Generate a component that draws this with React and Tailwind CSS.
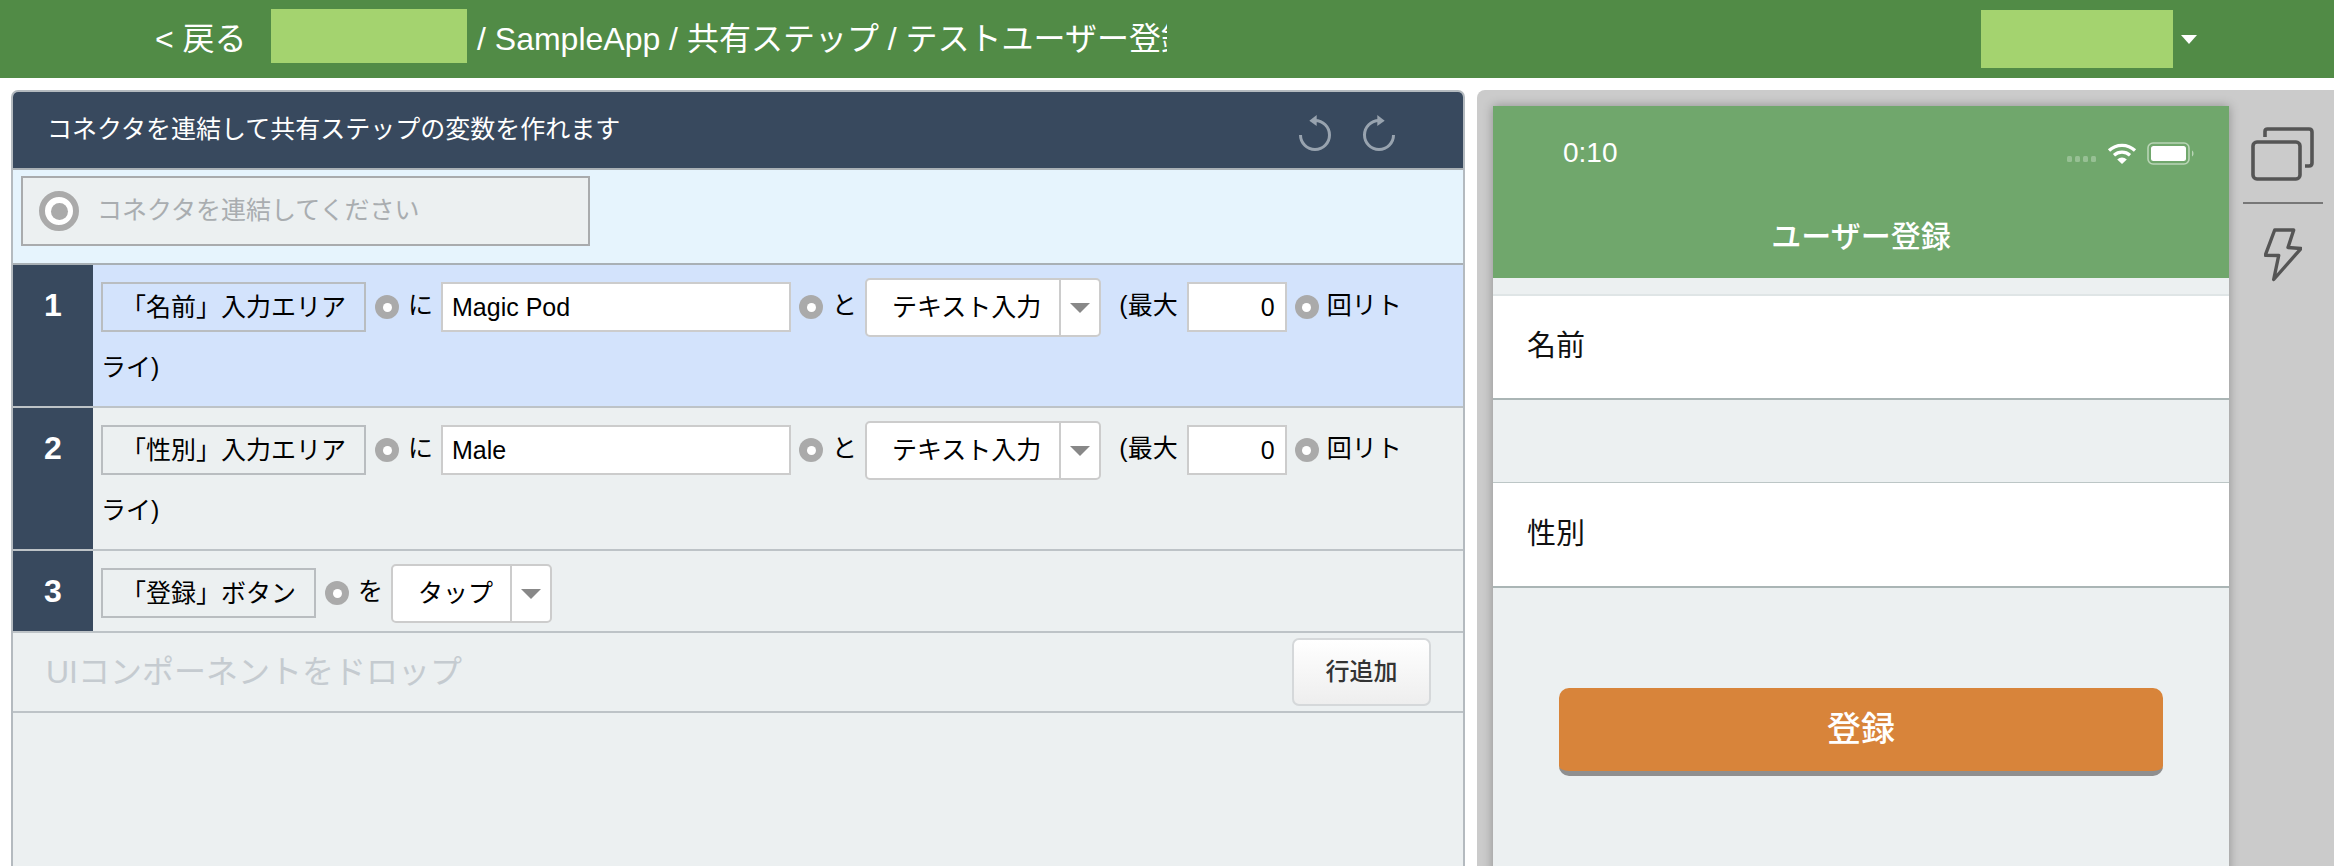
import React from "react";

const Dot = () => (
  <span className="inline-flex align-middle items-center justify-center w-[24px] h-[24px] rounded-full bg-[#aaaaaa]">
    <span className="block w-[9px] h-[9px] rounded-full bg-white" />
  </span>
);

const Caret = () => (
  <span className="block w-0 h-0 border-x-[10px] border-t-[10px] border-x-transparent border-t-[#888888]" />
);

const Selector = ({ children }) => (
  <span className="inline-flex align-middle items-center h-[50px] px-[18px] border-2 border-[#b9bdc0] leading-none">
    {children}
  </span>
);

const Field = ({ width, right, children }) => (
  <span
    className={`inline-flex align-middle items-center h-[50px] border-2 border-[#cccccc] bg-white leading-none ${width} ${
      right ? "justify-end pr-[10px]" : "pl-[9px]"
    }`}
  >
    {children}
  </span>
);

const Select = ({ label, textClass }) => (
  <span className="inline-flex align-middle items-stretch h-[59px] border-2 border-[#cccccc] rounded-[5px] bg-white leading-none">
    <span className={`flex items-center border-r-2 border-[#cccccc] ${textClass}`}>{label}</span>
    <span className="flex items-center justify-center w-[38px] pt-[2px]">
      <Caret />
    </span>
  </span>
);

const LongRow = ({ number, selector, value, selected }) => (
  <div className={`flex border-b-2 border-[#bdc3c7] ${selected ? "bg-[#d3e3fc]" : "bg-[#ecf0f1]"}`}>
    <div className="w-[80px] shrink-0 bg-[#38495e] text-white text-[32px] font-bold text-center pt-[10px] leading-[61px]">
      {number}
    </div>
    <div className="flex-1 pl-[8px] pr-[45px] pt-[10px] pb-[8px] text-[25px] leading-[61px] text-black">
      <Selector>{selector}</Selector>
      <span className="ml-[9px]"><Dot /></span>
      <span className="ml-[9px]">に</span>
      <span className="ml-[8px]"><Field width="w-[350px]">{value}</Field></span>
      <span className="ml-[8px]"><Dot /></span>
      <span className="ml-[9px]">と</span>
      <span className="ml-[8px]"><Select label="テキスト入力" textClass="pl-[25px] pr-[18px]" /></span>
      <span className="ml-[18px]">(最大</span>
      <span className="ml-[9px]"><Field width="w-[100px]" right>0</Field></span>
      <span className="ml-[8px]"><Dot /></span>
      <span className="ml-[8px]">回リトライ)</span>
    </div>
  </div>
);

const Undo = ({ mirror }) => (
  <svg width="40" height="40" viewBox="0 0 40 40" className={mirror ? "-scale-x-100" : ""}>
    <path d="M5.5 21A14.5 14.5 0 1 0 20 6.5" fill="none" stroke="#98a3af" strokeWidth="3" />
    <path d="M14.3 6.7L21.7 1V12Z" fill="#98a3af" />
  </svg>
);

const Wifi = () => (
  <svg width="30" height="22" viewBox="0 0 30 22" fill="none" stroke="white" strokeWidth="3.2">
    <path d="M2 8.5A19 19 0 0 1 28 8.5" />
    <path d="M7 13.2A12 12 0 0 1 23 13.2" />
    <path d="M15 22L10.2 17.5A7 7 0 0 1 19.8 17.5Z" fill="white" stroke="none" />
  </svg>
);

const Battery = () => (
  <svg width="48" height="23" viewBox="0 0 48 23">
    <rect x="1" y="1" width="41" height="21" rx="5" fill="none" stroke="#b9d5b6" strokeWidth="1.6" />
    <rect x="4" y="4" width="35" height="15" rx="2.5" fill="white" />
    <path d="M45 8.5C47 9.5 47 13.5 45 14.5Z" fill="#b9d5b6" />
  </svg>
);

const CopyIcon = () => (
  <svg width="64" height="56" viewBox="0 0 64 56" fill="none" stroke="#555555" strokeWidth="3.6" strokeLinejoin="round">
    <path d="M14 10V4.5Q14 2 16.5 2H58Q61 2 61 5V36Q61 39 58 39H54" />
    <rect x="2" y="15" width="47" height="37" rx="4" />
  </svg>
);

const BoltIcon = () => (
  <svg width="38" height="54" viewBox="0 0 38 54" fill="none" stroke="#555555" strokeWidth="3.4" strokeLinejoin="round">
    <path d="M10.7 2H29.7L24 19.5L37 20.5L9.7 51.5L14.7 27.5L1.3 27.2Z" />
  </svg>
);

export default function App() {
  return (
    <div className="h-[866px] w-[2334px] overflow-hidden bg-white font-['Liberation_Sans','Noto_Sans_CJK_JP',sans-serif]">
      <header className="h-[78px] bg-[#518b46] flex items-center pl-[155px] pr-[137px] text-white text-[32px] whitespace-nowrap">
        <div className="w-[116px] shrink-0">&lt; 戻る</div>
        <div className="w-[896px] shrink-0 h-full overflow-hidden flex items-center">
          <span className="block w-[196px] h-[54px] shrink-0 self-start mt-[9px] bg-[#a4d36f]" />
          <span className="ml-[10px]">/ SampleApp / 共有ステップ / テストユーザー登録</span>
        </div>
        <div className="ml-auto flex items-center">
          <span className="block w-[192px] h-[58px] bg-[#a4d36f]" />
          <span className="block ml-[8px] w-0 h-0 border-x-[8px] border-t-[9px] border-x-transparent border-t-white" />
        </div>
      </header>

      <main className="flex pt-[12px] pl-[11px] h-[788px]">
        <section className="w-[1454px] shrink-0 h-full border-x-2 border-t-2 border-[#b4babf] rounded-t-[7px] overflow-hidden bg-[#ecf0f1]">
          <div className="h-[76px] bg-[#38495e] flex items-center justify-between pl-[34px] pr-[64px] text-white text-[25px]">
            <span>コネクタを連結して共有ステップの変数を作れます</span>
            <div className="flex gap-[24px] mt-[8px]">
              <Undo />
              <Undo mirror />
            </div>
          </div>
          <div className="h-[97px] bg-[#e6f4fd] border-y-2 border-[#a9b0b5] pt-[6px] pl-[8px]">
            <div className="w-[569px] h-[70px] border-2 border-[#a9abad] bg-[#ecf0f1] flex items-center pl-[16px] text-[25px] text-[#a9adb0]">
              <span className="flex items-center justify-center w-[40px] h-[40px] rounded-full border-[6px] border-[#aaaaaa] bg-white">
                <span className="block w-[17px] h-[17px] rounded-full bg-[#aaaaaa]" />
              </span>
              <span className="ml-[18px]">コネクタを連結してください</span>
            </div>
          </div>

          <LongRow number="1" selector="「名前」入力エリア" value="Magic Pod" selected />
          <LongRow number="2" selector="「性別」入力エリア" value="Male" />

          <div className="flex border-b-2 border-[#bdc3c7] bg-[#ecf0f1]">
            <div className="w-[80px] shrink-0 bg-[#38495e] text-white text-[32px] font-bold text-center pt-[10px] leading-[61px]">
              3
            </div>
            <div className="flex-1 pl-[8px] pt-[10px] pb-[8px] text-[25px] leading-[61px] text-black">
              <Selector>「登録」ボタン</Selector>
              <span className="ml-[9px]"><Dot /></span>
              <span className="ml-[9px]">を</span>
              <span className="ml-[8px]"><Select label="タップ" textClass="pl-[25px] pr-[17px]" /></span>
            </div>
          </div>

          <div className="h-[80px] border-b-2 border-[#bdc3c7] flex items-center justify-between pl-[33px] pr-[32px]">
            <span className="text-[32px] text-[#c5cbd0]">UIコンポーネントをドロップ</span>
            <button className="w-[139px] h-[68px] border-2 border-[#d5d8da] rounded-[7px] bg-gradient-to-b from-white to-[#eeeeee] text-[24px] font-medium text-[#333333]">
              行追加
            </button>
          </div>
        </section>

        <section className="ml-[12px] flex-1 h-full bg-[#cbcbcb] rounded-tl-[8px] flex pt-[16px] pl-[16px]">
          <div className="w-[736px] shrink-0 h-[800px] bg-[#ecf0f1] shadow-[0_0_10px_rgba(0,0,0,0.3)]">
            <div className="h-[172px] bg-[#70a76c] pt-[35px] text-white">
              <div className="flex items-center h-[24px] pl-[70px] pr-[34px]">
                <span className="text-[28px] leading-none">0:10</span>
                <div className="ml-auto flex items-center">
                  <div className="flex gap-[3px] mt-[12px] mr-[11px]">
                    <span className="block w-[5px] h-[6px] rounded-[1.5px] bg-[#97c094]" />
                    <span className="block w-[5px] h-[6px] rounded-[1.5px] bg-[#97c094]" />
                    <span className="block w-[5px] h-[6px] rounded-[1.5px] bg-[#97c094]" />
                    <span className="block w-[5px] h-[6px] rounded-[1.5px] bg-[#97c094]" />
                  </div>
                  <Wifi />
                  <span className="block ml-[10px]"><Battery /></span>
                </div>
              </div>
              <div className="mt-[57px] text-center text-[30px] leading-[30px] font-medium">ユーザー登録</div>
            </div>
            <div className="h-[18px] border-b-2 border-[#dfe5e6]" />
            <div className="h-[104px] bg-white border-b-2 border-[#aab5b5] flex items-center pl-[34px] text-[29px] text-[#111111]">
              名前
            </div>
            <div className="h-[83px] border-b border-[#bcc6c6]" />
            <div className="h-[105px] bg-white border-b-2 border-[#aab5b5] flex items-center pl-[34px] text-[29px] text-[#111111]">
              性別
            </div>
            <div className="pt-[100px] px-[66px]">
              <button className="w-full h-[88px] rounded-[10px] bg-[#d8843a] border-b-[5px] border-[#8f8f8f] text-white text-[34px] font-medium">
                登録
              </button>
            </div>
          </div>
          <div className="flex-1 flex flex-col items-center pt-[21px] pl-[2px]">
            <CopyIcon />
            <div className="w-[80px] h-[2px] bg-[#777777] mt-[19px]" />
            <div className="mt-[24px]"><BoltIcon /></div>
          </div>
        </section>
      </main>
    </div>
  );
}
